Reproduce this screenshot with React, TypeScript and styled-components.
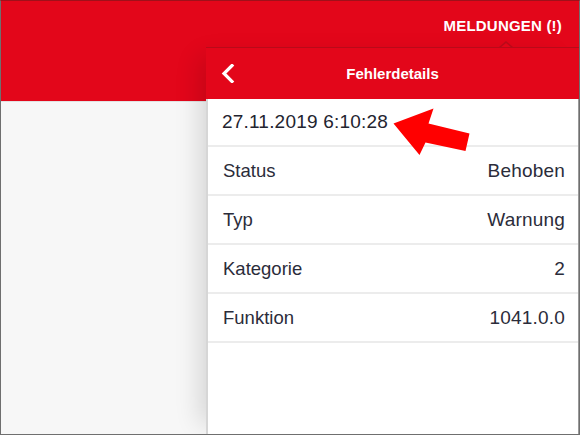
import React from "react";
import styled, { createGlobalStyle } from "styled-components";

const Global = createGlobalStyle`
  html, body { margin: 0; padding: 0; background: #ffffff; }
  * { box-sizing: border-box; }
`;

const RED = "#e3061a";
const RED_DARK = "#b90a19";

const Frame = styled.div`
  position: relative;
  width: 580px;
  height: 435px;
  border: 1px solid #6f6f6f;
  border-top-color: #a0101a;
  display: flex;
  flex-direction: column;
  overflow: hidden;
  font-family: "Liberation Sans", Arial, sans-serif;
  background: #f7f7f7;
`;

const TopBar = styled.header`
  height: 101px;
  flex-shrink: 0;
  background: ${RED};
  border-bottom: 1px solid #e2e2e2;
  display: flex;
  justify-content: flex-end;
  align-items: flex-start;
  padding-right: 17px;
`;

const NavItem = styled.div`
  color: #ffffff;
  font-weight: 700;
  font-size: 15px;
  height: 50px;
  line-height: 50px;
  letter-spacing: 0.2px;
`;

const Body = styled.main`
  flex: 1;
  background: #f7f7f7;
`;

const Popover = styled.section`
  position: absolute;
  left: 205px;
  top: 46px;
  right: 0;
  bottom: 0;
  display: flex;
  flex-direction: column;
  box-shadow: -16px 0 24px -10px rgba(0, 0, 0, 0.14);
`;

const Notch = styled.div`
  position: absolute;
  top: -6px;
  left: 293px;
  width: 0;
  height: 0;
  border-left: 7px solid transparent;
  border-right: 7px solid transparent;
  border-bottom: 6px solid ${RED_DARK};
  &::after {
    content: "";
    position: absolute;
    left: -6px;
    top: 1.5px;
    border-left: 6px solid transparent;
    border-right: 6px solid transparent;
    border-bottom: 5px solid ${RED};
  }
`;

const PanelHeader = styled.div`
  position: relative;
  height: 52px;
  flex-shrink: 0;
  background: ${RED};
  border-top: 1px solid ${RED_DARK};
  display: flex;
  align-items: center;
  justify-content: center;
`;

const BackButton = styled.button`
  position: absolute;
  left: 14px;
  top: 50%;
  transform: translateY(-50%);
  background: none;
  border: none;
  padding: 0;
  width: 16px;
  height: 20px;
  display: flex;
  align-items: center;
  justify-content: center;
  cursor: pointer;
`;

const Title = styled.h1`
  margin: 0;
  color: #ffffff;
  font-size: 15px;
  font-weight: 700;
`;

const Content = styled.div`
  flex: 1;
  background: #ffffff;
  border-left: 2px solid #d6d6d6;
  border-right: 1px solid #9a9a9a;
  display: flex;
  flex-direction: column;
`;

const DateRow = styled.div`
  height: 48px;
  flex-shrink: 0;
  display: flex;
  align-items: center;
  padding: 0 14px;
  border-bottom: 2px solid #ececec;
  font-size: 19px;
  color: #23242f;
  letter-spacing: 0.2px;
`;

const Row = styled.div`
  height: 49px;
  flex-shrink: 0;
  display: flex;
  align-items: center;
  justify-content: space-between;
  padding: 0 13px 0 15px;
  border-bottom: 2px solid #ececec;
  font-size: 18.5px;
  color: #2b2c3a;
`;

const Label = styled.span``;
const Value = styled.span`
  font-size: 19px;
  letter-spacing: 0.2px;
`;

const ArrowOverlay = styled.svg`
  position: absolute;
  left: 0;
  top: 0;
  pointer-events: none;
`;

const rows: [string, string][] = [
  ["Status", "Behoben"],
  ["Typ", "Warnung"],
  ["Kategorie", "2"],
  ["Funktion", "1041.0.0"],
];

export default function App() {
  return (
    <>
      <Global />
      <Frame>
        <TopBar>
          <NavItem>MELDUNGEN (!)</NavItem>
        </TopBar>
        <Body />
        <Popover>
          <Notch />
          <PanelHeader>
            <BackButton aria-label="Zurück">
              <svg width="14" height="19" viewBox="0 0 14 19">
                <polyline
                  points="11,1.5 3,9.5 11,17.5"
                  fill="none"
                  stroke="#ffffff"
                  strokeWidth="3.2"
                  strokeLinecap="square"
                />
              </svg>
            </BackButton>
            <Title>Fehlerdetails</Title>
          </PanelHeader>
          <Content>
            <DateRow>27.11.2019 6:10:28</DateRow>
            {rows.map(([l, v]) => (
              <Row key={l}>
                <Label>{l}</Label>
                <Value>{v}</Value>
              </Row>
            ))}
          </Content>
        </Popover>
        <ArrowOverlay width="580" height="435" viewBox="0 0 580 435">
          <polygon
            points="392.5,122.5 432.5,107.5 427.5,122.5 468.5,132.5 464.5,150 424.5,141.5 418.5,154"
            fill="#ff0000"
          />
        </ArrowOverlay>
      </Frame>
    </>
  );
}
